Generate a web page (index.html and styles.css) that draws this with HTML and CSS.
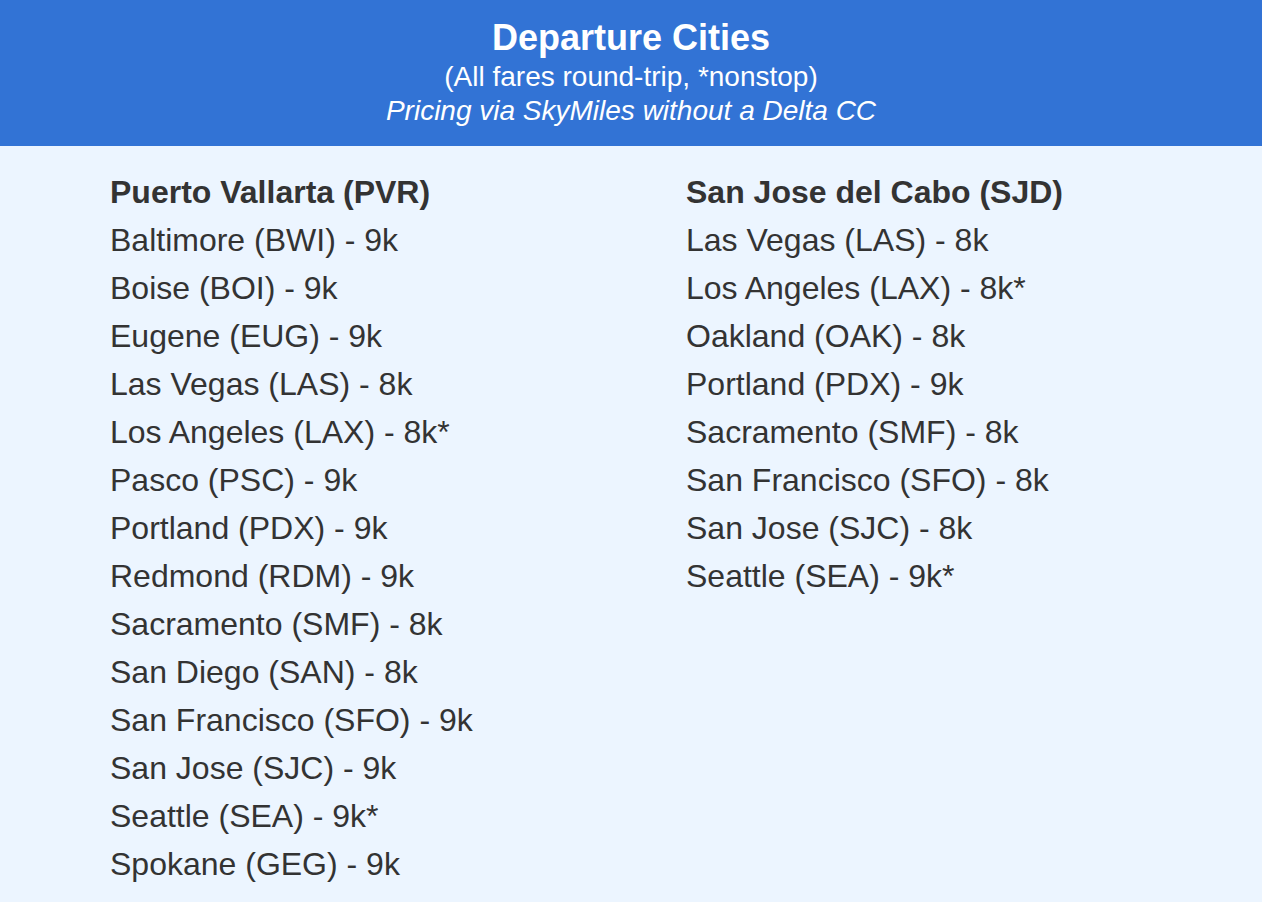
FILE: index.html
```html
<!DOCTYPE html>
<html>
<head>
<meta charset="utf-8">
<link rel="stylesheet" href="styles.css">
</head>
<body>
<header class="banner">
  <h1 class="title">Departure Cities</h1>
  <p class="sub">(All fares round-trip, *nonstop)</p>
  <p class="sub italic">Pricing via SkyMiles without a Delta CC</p>
</header>
<main class="cols">
  <section class="col">
    <h2 class="dest">Puerto Vallarta (PVR)</h2>
    <ul class="list">
      <li>Baltimore (BWI) - 9k</li>
      <li>Boise (BOI) - 9k</li>
      <li>Eugene (EUG) - 9k</li>
      <li>Las Vegas (LAS) - 8k</li>
      <li>Los Angeles (LAX) - 8k*</li>
      <li>Pasco (PSC) - 9k</li>
      <li>Portland (PDX) - 9k</li>
      <li>Redmond (RDM) - 9k</li>
      <li>Sacramento (SMF) - 8k</li>
      <li>San Diego (SAN) - 8k</li>
      <li>San Francisco (SFO) - 9k</li>
      <li>San Jose (SJC) - 9k</li>
      <li>Seattle (SEA) - 9k*</li>
      <li>Spokane (GEG) - 9k</li>
    </ul>
  </section>
  <section class="col">
    <h2 class="dest">San Jose del Cabo (SJD)</h2>
    <ul class="list">
      <li>Las Vegas (LAS) - 8k</li>
      <li>Los Angeles (LAX) - 8k*</li>
      <li>Oakland (OAK) - 8k</li>
      <li>Portland (PDX) - 9k</li>
      <li>Sacramento (SMF) - 8k</li>
      <li>San Francisco (SFO) - 8k</li>
      <li>San Jose (SJC) - 8k</li>
      <li>Seattle (SEA) - 9k*</li>
    </ul>
  </section>
</main>
</body>
</html>
```

FILE: styles.css
```css
html, body {
  margin: 0;
  padding: 0;
}
body {
  background: #ecf5ff;
  font-family: "Liberation Sans", Arial, sans-serif;
  color: #333;
  width: 1262px;
  height: 902px;
  overflow: hidden;
}
.banner {
  background: #3273d5;
  color: #fff;
  text-align: center;
  padding: 16px 0 0;
  height: 146px;
  box-sizing: border-box;
}
.title {
  margin: 0;
  font-size: 36px;
  font-weight: bold;
  line-height: 44px;
}
.sub {
  margin: 0;
  font-size: 28px;
  line-height: 34px;
}
.italic {
  font-style: italic;
}
.cols {
  display: grid;
  grid-template-columns: 576px 1fr;
  padding: 22px 0 0 110px;
}
.dest {
  margin: 0;
  font-size: 32px;
  font-weight: bold;
  line-height: 48px;
}
.list {
  list-style: none;
  margin: 0;
  padding: 0;
  font-size: 32px;
  line-height: 48px;
}
```
